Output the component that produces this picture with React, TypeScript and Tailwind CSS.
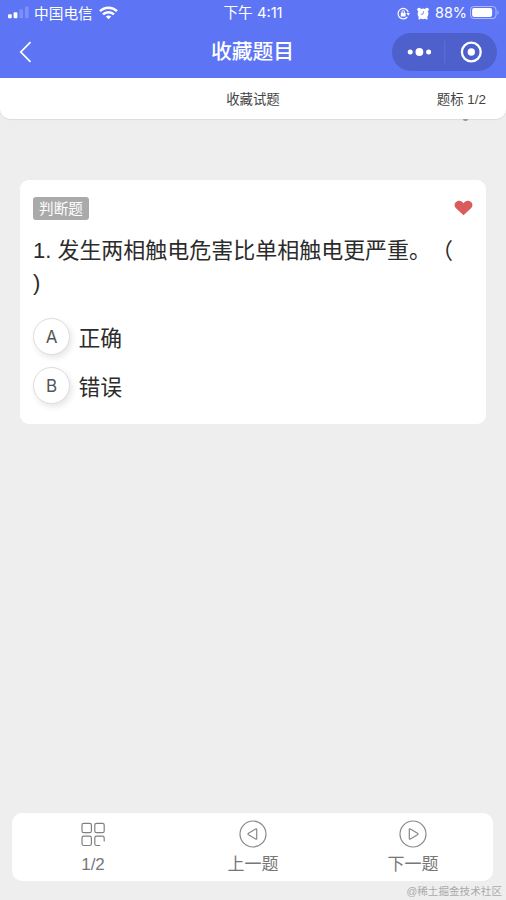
const latin = 'font-["Liberation_Sans","Noto_Sans_CJK_SC",sans-serif]';

function StatusBar() {
  return (
    <div className='relative flex h-[26px] items-center font-["Inter","Noto_Sans_CJK_SC",sans-serif] text-[14px] leading-[26px] text-white'>
      <svg className="ml-2 shrink-0" width="22" height="14" viewBox="0 0 22 14" fill="#fff">
        <rect x="0" y="8.2" width="3.8" height="4" rx="1" />
        <rect x="5.6" y="6.2" width="3.8" height="6" rx="1" />
        <rect x="11.4" y="3.2" width="3.6" height="9" rx="1" opacity=".2" />
        <rect x="17" y="0.5" width="3.6" height="11.7" rx="1" opacity=".2" />
      </svg>
      <span className="ml-1 w-[59px] whitespace-nowrap pt-px text-[14.7px]">中国电信</span>
      <svg className="ml-1.5 shrink-0" width="19" height="14" viewBox="0 0 19 14" fill="none" stroke="#fff" strokeWidth="2.5">
        <path d="M1 5.1C5.7.5 13.3.5 18 5.1" />
        <path d="M4 8.4c3-3 8-3 11 0" />
        <path d="M6.8 10.5c1.5-1.4 3.9-1.4 5.4 0L9.5 13.3Z" fill="#fff" stroke="none" />
      </svg>
      <span className="absolute inset-x-0 text-center text-[14.7px]">下午 4:11</span>
      <div className="ml-auto flex items-center pr-[6px]">
        <svg width="13" height="13" viewBox="0 0 13 13" fill="none" stroke="#fff" strokeWidth="1.2">
          <path d="M10.4 9.8A5.2 5.2 0 1 1 11.3 5.4" />
          <path d="m9.3 6.1 3.7 0-1.7 2.6Z" fill="#fff" stroke="none" />
          <rect x="3.8" y="5.7" width="4.8" height="3.7" rx=".4" fill="#fff" stroke="none" />
          <path d="M4.9 6V4.9a1.3 1.3 0 0 1 2.6 0V6" strokeWidth="1" />
        </svg>
        <svg className="ml-[7px]" width="12" height="13" viewBox="0 0 12 13" fill="#fff">
          <circle cx="6" cy="6.8" r="5.4" />
          <circle cx="2.1" cy="2.6" r="1.9" />
          <circle cx="9.9" cy="2.6" r="1.9" />
          <path d="m2 12.2 1-2m7 2-1-2" stroke="#fff" strokeWidth="2" />
          <path d="M6.5 4.2 6 7.2H3.8" fill="none" stroke="#5d75f5" strokeWidth=".8" />
        </svg>
        <span className="ml-[6px] w-[32px] whitespace-nowrap text-[14.4px]">88%</span>
        <svg className="ml-[3px]" width="30" height="14" viewBox="0 0 30 14">
          <rect x=".5" y=".5" width="25.5" height="12" rx="3.2" fill="none" stroke="#fff" strokeOpacity=".5" />
          <rect x="2.1" y="2.1" width="20" height="8.8" rx="1.8" fill="#fff" />
          <path d="M27.5 4.5c1.5.6 1.5 3.4 0 4Z" fill="#fff" opacity=".5" />
        </svg>
      </div>
    </div>
  );
}

function NavBar() {
  return (
    <div className="relative flex h-[52px] items-center justify-between pr-[9px] pl-[19px]">
      <svg width="13" height="22" viewBox="0 0 13 22" fill="none" stroke="#fff" strokeWidth="1.7">
        <path d="M11.5 1.2 1.8 11l9.7 9.8" />
      </svg>
      <h1 className="absolute inset-x-0 pr-px text-center text-[20.8px] font-medium text-white">收藏题目</h1>
      <div className="relative flex h-[38px] w-[105px] items-center rounded-full bg-[#4d60cc]">
        <svg width="105" height="38" viewBox="0 0 105 38" fill="#fff">
          <circle cx="18.2" cy="19" r="2.5" />
          <circle cx="27.4" cy="19" r="3.9" />
          <circle cx="36.6" cy="19" r="2.5" />
          <path d="M52.8 8v22" stroke="#6073d8" />
          <circle cx="79.3" cy="19" r="9.4" fill="none" stroke="#fff" strokeWidth="2.3" />
          <circle cx="79.3" cy="19" r="3.7" />
        </svg>
      </div>
    </div>
  );
}

function Option({ letter, label }: { letter: string; label: string }) {
  return (
    <div className="flex h-[49px] items-start">
      <span className="flex size-[37px] items-center justify-center rounded-full border border-[#ddd] bg-white pt-[2px] font-[Inter,sans-serif] text-[17px] text-[#555] shadow-[2px_3px_6px_rgba(0,0,0,0.1)]">
        {letter}
      </span>
      <span className="ml-[8.5px] text-[21.8px] leading-[41px] text-[#2b2b2b]">{label}</span>
    </div>
  );
}

function QuestionCard() {
  return (
    <section className="mx-5 mt-[61px] h-[244px] rounded-[9px] bg-white px-[13px] pt-[17px]">
      <div className="flex h-6 items-start justify-between">
        <span className="flex h-[23px] w-14 items-center justify-center rounded-[3px] bg-[#aaa] pt-[2px] text-[14.6px] text-white">判断题</span>
        <svg className="mt-[3px]" width="19" height="16" viewBox="0 0 19 16">
          <path d="M9.5 15.2 2 8.3C-.3 6 .3 2.3 3.2 1.2 5.8.2 8.1 1.3 9.5 3.3c1.4-2 3.7-3.1 6.3-2.1C18.7 2.3 19.3 6 17 8.3Z" fill="#d95b5b" />
        </svg>
      </div>
      <p className="mt-[14px] text-[22px] leading-[32px] tracking-[-0.02px] whitespace-nowrap text-[#2b2b2b] [text-spacing-trim:space-all]">
        1. 发生两相触电危害比单相触电更严重。（<br />)
      </p>
      <div className="mt-[19px]">
        <Option letter="A" label="正确" />
        <Option letter="B" label="错误" />
      </div>
    </section>
  );
}

function StepIcon({ back = false }: { back?: boolean }) {
  return (
    <svg width="28" height="28" viewBox="0 0 28 28" fill="none" stroke="#888" strokeWidth="1.2">
      <circle cx="14" cy="14" r="13" />
      <path d={back ? "M17.7 9.6v8.8q0 1.2-1.1.6l-7.1-4.2q-1-.8 0-1.6l7.1-4.2q1.1-.6 1.1.6Z" : "M10.3 9.6v8.8q0 1.2 1.1.6l7.1-4.2q1-.8 0-1.6l-7.1-4.2q-1.1-.6-1.1.6Z"} />
    </svg>
  );
}

function BottomBar() {
  return (
    <footer className="mr-[13px] ml-3 grid h-[68px] grid-cols-3 rounded-[10px] bg-white pt-[7px] pl-px text-center text-[17px] leading-[33px] text-[#777]">
      <div className="flex flex-col items-center">
        <svg width="28" height="28" viewBox="0 0 28 28" fill="none" stroke="#808080" strokeWidth="1.2">
          <rect x="3" y="3.3" width="9.4" height="9.4" rx="1.8" />
          <rect x="15.8" y="3.3" width="9.4" height="9.4" rx="1.8" />
          <rect x="3" y="16.1" width="9.4" height="9.4" rx="1.8" />
          <path d="M21.2 25.5h-3.6q-1.8 0-1.8-1.8v-5.8q0-1.8 1.8-1.8h5.8q1.8 0 1.8 1.8v3.6" />
        </svg>
        <span>1/2</span>
      </div>
      <div className="flex flex-col items-center">
        <StepIcon back />
        <span>上一题</span>
      </div>
      <div className="flex flex-col items-center">
        <StepIcon />
        <span>下一题</span>
      </div>
    </footer>
  );
}

export default function App() {
  return (
    <main className={`relative flex h-[900px] w-[506px] flex-col overflow-hidden bg-[#eee] ${latin}`}>
      <header className="h-[78px] bg-[#5d75f5]">
        <StatusBar />
        <NavBar />
      </header>
      <div className="relative grid h-[41px] grid-cols-3 items-center rounded-b-[10px] bg-white px-5 pt-[2px] text-[13.4px] leading-5 text-[#444] shadow-[0_1px_1px_rgba(0,0,0,0.08)]">
        <span />
        <span className="text-center">收藏试题</span>
        <span className="text-right">题标 1/2</span>
        <i className="absolute right-[38px] -bottom-[2px] h-[2px] w-[5px] rounded-b-full bg-[#999]" />
      </div>
      <QuestionCard />
      <div className="grow" />
      <BottomBar />
      <div className="h-[19px] pr-[4px] text-right text-[10.6px] leading-[20px] text-[#aaa]">@稀土掘金技术社区</div>
    </main>
  );
}
